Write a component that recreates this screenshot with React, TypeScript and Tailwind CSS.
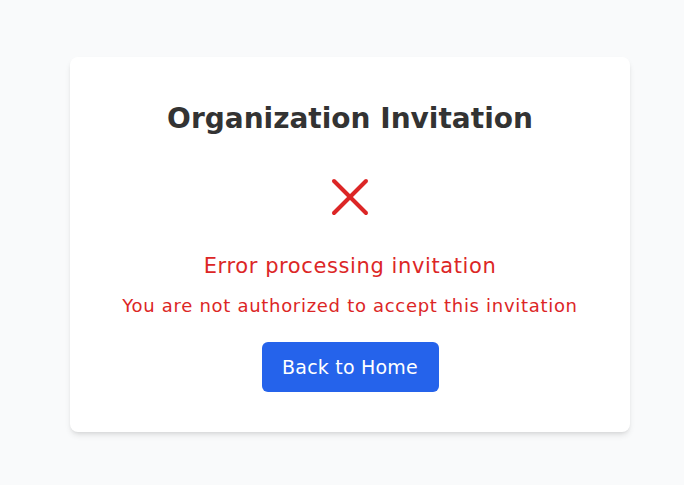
import { X } from 'lucide-react'

const App = () => {
  return (
    <div className="min-h-screen bg-gray-50 pt-[57px] font-['DejaVu_Sans',sans-serif]">
      <div className="ml-[70px] w-[560px] h-[375px] bg-white rounded-lg shadow-md flex flex-col items-center pt-[44px]">
        <h1 className="text-[28px] leading-[36px] font-bold text-[#333333]">Organization Invitation</h1>
        <div className="mt-[28px]">
          <X className="w-16 h-16 text-[#dc2626]" strokeWidth={1.5} />
        </div>
        <p className="mt-[23px] text-[21px] leading-[28px] tracking-[0.6px] text-[#dc2626]">Error processing invitation</p>
        <p className="mt-[12px] text-[18px] leading-[28px] tracking-[0.7px] text-[#dc2626]">You are not authorized to accept this invitation</p>
        <button className="mt-[22px] w-[177px] h-[50px] bg-[#2563eb] text-white text-[19px] tracking-[0.2px] rounded-md">Back to Home</button>
      </div>
    </div>
  )
}

export default App
